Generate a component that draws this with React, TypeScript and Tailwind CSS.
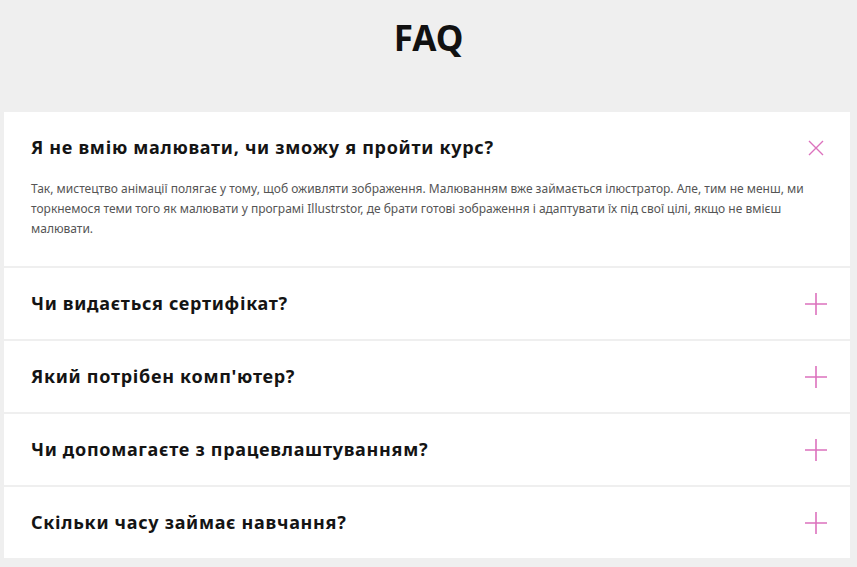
const faqs = [
  {
    q: 'Я не вмію малювати, чи зможу я пройти курс?',
    a: 'Так, мистецтво анімації полягає у тому, щоб оживляти зображення. Малюванням вже займається ілюстратор. Але, тим не менш, ми торкнемося теми того як малювати у програмі Illustrstor, де брати готові зображення і адаптувати їх під свої цілі, якщо не вмієш малювати.',
    open: true,
  },
  { q: 'Чи видається сертифікат?', a: '', open: false },
  { q: "Який потрібен комп'ютер?", a: '', open: false },
  { q: 'Чи допомагаєте з працевлаштуванням?', a: '', open: false },
  { q: 'Скільки часу займає навчання?', a: '', open: false },
]

function Plus() {
  return (
    <svg width="24" height="24" viewBox="0 0 24 24" fill="none" stroke="#dc72bd" strokeWidth="1.6">
      <path d="M12 1v22M1 12h22" />
    </svg>
  )
}

function Close() {
  return (
    <svg width="18" height="18" viewBox="0 0 18 18" fill="none" stroke="#dc72bd" strokeWidth="1.4">
      <path d="M2 2l14 14M16 2L2 16" />
    </svg>
  )
}

export default function App() {
  return (
    <div className="min-h-[567px] w-[857px] bg-[#efefef] font-['Noto_Sans',sans-serif]">
      <div className="flex h-[112px] justify-center pt-[14px]">
        <h1 className="text-[35px] font-bold leading-[48px] text-[#111]">FAQ</h1>
      </div>
      <div className="ml-[4px] flex w-[846px] flex-col gap-[2px]">
        {faqs.map((f) => (
          <div key={f.q} className="bg-white">
            <div className="flex h-[71px] items-center justify-between pl-[27px] pr-[22px]">
              <h3 className="text-[18px] font-bold tracking-[0.7px] text-[#141414]">{f.q}</h3>
              {f.open ? <div className="pr-[3px]"><Close /></div> : <Plus />}
            </div>
            {f.open && (
              <p className="-mt-[4px] pb-[27px] pl-[27px] pr-[30px] text-[12px] leading-[20px] text-[#555]">
                {f.a}
              </p>
            )}
          </div>
        ))}
      </div>
    </div>
  )
}
